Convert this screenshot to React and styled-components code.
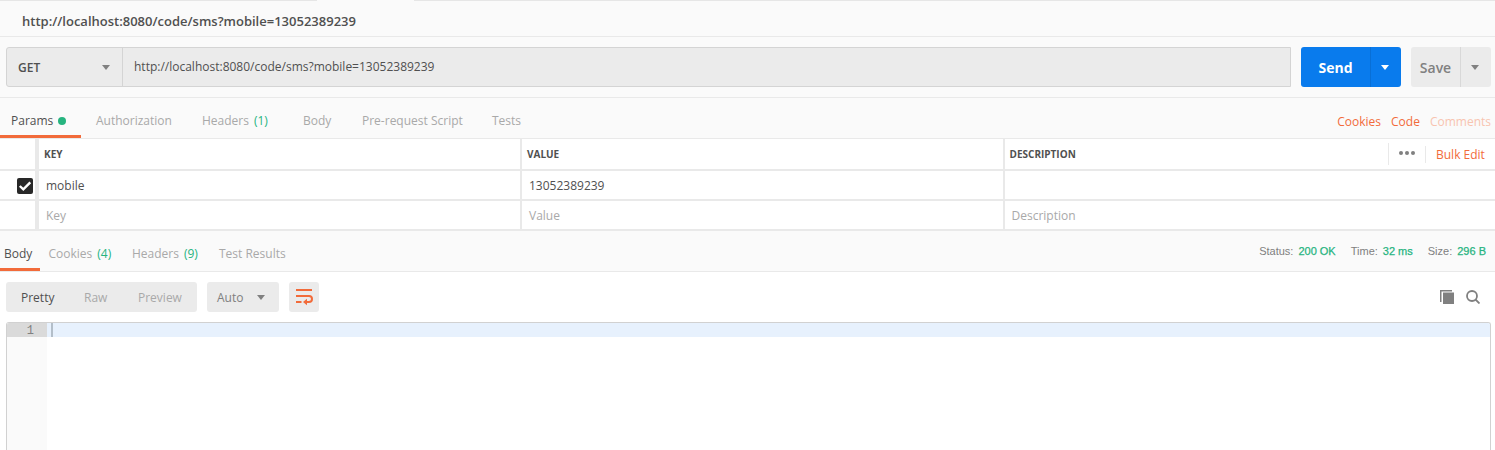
import React from "react";
import styled, { createGlobalStyle, css } from "styled-components";

const orange = "#f26b3a";
const green = "#26b47f";
const line = "#e9e9e9";

const GlobalStyle = createGlobalStyle`
  * { box-sizing: border-box; }
  body {
    margin: 0;
    background: #fff;
    font-family: "Open Sans", sans-serif;
    font-size: 12px;
    color: #505050;
    overflow: hidden;
  }
`;

const Page = styled.main`
  display: flex;
  flex-direction: column;
  width: 1495px;
  height: 450px;
  overflow: hidden;
  white-space: nowrap;
`;

const TabStrip = styled.div`
  display: flex;
  justify-content: space-between;
  height: 1px;
  flex: none;
  background: #fafafa;
`;

const StripEdge = styled.i`
  width: ${(p) => p.$w}px;
  background: #e6e6e6;
`;

const RequestTitle = styled.h1`
  flex: none;
  height: 36px;
  margin: 0;
  padding: 0 0 0 22px;
  line-height: 40px;
  background: #fafafa;
  border-bottom: 1px solid ${line};
  font-size: 13px;
  font-weight: 600;
`;

const RequestBar = styled.section`
  flex: none;
  display: flex;
  height: 61px;
  padding: 10px 4px 10px 6px;
  background: #fafafa;
  border-bottom: 1px solid ${line};
`;

const UrlField = styled.div`
  display: flex;
  width: 1285px;
  height: 40px;
  margin-right: 10px;
  background: #ebebeb;
  border: 1px solid #d4d4d4;
  border-radius: 3px 0 0 3px;
`;

const Method = styled.div`
  display: flex;
  align-items: center;
  justify-content: space-between;
  width: 116px;
  padding: 0 12px 0 11px;
  border-right: 1px solid #d4d4d4;
  font-weight: 600;
`;

const Url = styled.div`
  padding-left: 11px;
  line-height: 38px;
`;

const Caret = styled.i`
  width: 0;
  height: 0;
  border: 4px solid transparent;
  border-top: 5px solid ${(p) => p.$color || "#808080"};
  border-bottom: 0;
`;

const SplitButton = styled.div`
  display: flex;
  width: ${(p) => p.$w}px;
  height: 40px;
  margin-right: ${(p) => p.$gap || 0}px;
  border-radius: 3px;
  overflow: hidden;
  background: ${(p) => (p.$primary ? "#097bed" : "#ebebeb")};
  color: ${(p) => (p.$primary ? "#fff" : "#808080")};
  font-size: 14px;
  font-weight: ${(p) => (p.$primary ? 700 : 600)};
`;

const SplitLabel = styled.div`
  width: ${(p) => p.$w}px;
  line-height: 41px;
  text-align: center;
`;

const SplitArrow = styled.div`
  flex: 1;
  display: flex;
  align-items: center;
  justify-content: center;
  padding-right: 2px;
  border-left: 1px solid ${(p) => p.$line};
`;

const Tabs = styled.nav`
  flex: none;
  display: flex;
  height: ${(p) => p.$h}px;
  background: #fafafa;
  border-bottom: 1px solid ${line};
`;

const Tab = styled.div`
  display: flex;
  width: ${(p) => p.$w}px;
  padding-left: ${(p) => p.$pad || 0}px;
  line-height: ${(p) => p.$lh}px;
  color: #a9a9a9;
  ${(p) =>
    p.$active &&
    css`
      color: #505050;
      border-bottom: 3px solid ${orange};
    `}
`;

const Count = styled.span`
  margin-left: 5px;
  color: ${green};
`;

const Dot = styled.i`
  width: 8px;
  height: 8px;
  margin: 19px 0 0 5px;
  border-radius: 50%;
  background: ${green};
`;

const Links = styled.div`
  display: flex;
  gap: 10px;
  margin-left: auto;
  padding-right: 4px;
  line-height: 48px;
  color: ${orange};
`;

const Muted = styled.span`
  color: #f8c4b0;
`;

const Table = styled.section`
  flex: none;
  background: #fff;
`;

const Row = styled.div`
  display: flex;
  height: ${(p) => p.$h}px;
  border-bottom: 2px solid ${line};
`;

const CheckCell = styled.div`
  width: 39px;
  padding: 7px 0 0 17px;
  border-right: 4px solid ${line};
`;

const Checkbox = styled.div`
  width: 16px;
  height: 16px;
  border-radius: 2px;
  background: #282828;
  svg { display: block; }
`;

const Cell = styled.div`
  width: ${(p) => p.$w}px;
  padding-left: ${(p) => (p.$last ? 6.5 : 7)}px;
  line-height: 29px;
  color: ${(p) => (p.$placeholder ? "#a9a9a9" : "#505050")};
  border-right: ${(p) => (p.$last ? "0" : `2px solid ${line}`)};
`;

const HeadCell = styled(Cell)`
  display: flex;
  padding-left: ${(p) => (p.$last ? 4.5 : 5)}px;
  line-height: 31px;
  font-size: 10px;
  font-weight: 700;
`;

const HeadTools = styled.div`
  display: flex;
  align-items: center;
  margin-left: auto;
  font-size: 12px;
  font-weight: 400;
  color: ${orange};
`;

const MoreButton = styled.div`
  display: flex;
  align-items: center;
  gap: 2px;
  width: 37px;
  height: 22px;
  padding: 0 0 2px 10px;
  border-left: 1px solid ${line};
`;

const MoreDot = styled.i`
  width: 4px;
  height: 4px;
  border-radius: 50%;
  background: #808080;
`;

const BulkEdit = styled.div`
  width: 70px;
  height: 17px;
  padding-left: 10px;
  line-height: 17px;
  border-left: 1px solid ${line};
`;

const Stats = styled.div`
  display: flex;
  gap: 15px;
  margin-left: auto;
  padding-right: 9px;
  line-height: 40px;
  font-family: "Liberation Sans", sans-serif;
  font-size: 11px;
  color: #808080;
`;

const StatValue = styled.span`
  margin-left: 5px;
  color: ${green};
  -webkit-text-stroke: 0.25px ${green};
`;

const Toolbar = styled.section`
  flex: none;
  display: flex;
  height: 50px;
  padding: 10px 15px 10px 6px;
`;

const Group = styled.div`
  display: flex;
  align-items: center;
  width: ${(p) => p.$w}px;
  height: 30px;
  margin-right: 10px;
  padding-left: ${(p) => p.$pad}px;
  gap: ${(p) => p.$gap || 0}px;
  line-height: 32px;
  border-radius: 3px;
  background: #ebebeb;
  color: ${(p) => p.$color || "#a9a9a9"};
`;

const Mode = styled.span`
  width: ${(p) => p.$w}px;
  padding-top: 1px;
  color: ${(p) => (p.$active ? "#505050" : "#a9a9a9")};
`;

const GroupLabel = styled.span`
  padding-top: 1px;
`;

const ToolIcons = styled.div`
  display: flex;
  gap: 12px;
  margin: 8px 0 0 auto;
`;

const Editor = styled.section`
  flex: 1;
  display: flex;
  margin: 0 4px 0 6px;
  border: 1px solid #d1d1d1;
  border-bottom: 0;
  border-radius: 3px 3px 0 0;
  overflow: hidden;
`;

const Gutter = styled.div`
  width: 40px;
  background: #fafafa;
`;

const LineNumber = styled.div`
  height: 14px;
  padding-right: 13px;
  line-height: 17px;
  text-align: right;
  background: #dadada;
  color: #808080;
  font-family: "Liberation Mono", monospace;
  font-size: 12px;
`;

const ActiveLine = styled.div`
  flex: 1;
  height: 14px;
  padding-left: 4px;
  background: #e7f1fd;
`;

const Cursor = styled.i`
  display: block;
  width: 2px;
  height: 14px;
  background: #b3bec9;
`;

const requestTabs = [
  ["Authorization", 106],
  ["Headers", 101, "(1)"],
  ["Body", 59],
  ["Pre-request Script", 130],
  ["Tests", 60],
];

const responseTabs = [
  ["Cookies", 83.5, "(4)"],
  ["Headers", 87, "(9)"],
  ["Test Results", 90],
];

const stats = [
  ["Status:", "200 OK"],
  ["Time:", "32 ms"],
  ["Size:", "296 B"],
];

const address = "http://localhost:8080/code/sms?mobile=13052389239";

export default function App() {
  return (
    <Page>
      <GlobalStyle />
      <TabStrip>
        <StripEdge $w={317} />
        <StripEdge $w={1081} />
      </TabStrip>
      <RequestTitle>{address}</RequestTitle>
      <RequestBar>
        <UrlField>
          <Method>GET<Caret /></Method>
          <Url>{address}</Url>
        </UrlField>
        <SplitButton $primary $w={100} $gap={10}>
          <SplitLabel $w={69}>Send</SplitLabel>
          <SplitArrow $line="#086fd6"><Caret $color="#fff" /></SplitArrow>
        </SplitButton>
        <SplitButton $w={80}>
          <SplitLabel $w={49}>Save</SplitLabel>
          <SplitArrow $line="#d8d8d8"><Caret /></SplitArrow>
        </SplitButton>
      </RequestBar>
      <Tabs $h={41}>
        <Tab $active $w={81} $pad={11} $lh={46}>Params<Dot /></Tab>
        <Tab $w={15} />
        {requestTabs.map(([label, w, count]) => (
          <Tab key={label} $w={w} $lh={46}>
            {label}{count && <Count>{count}</Count>}
          </Tab>
        ))}
        <Links><span>Cookies</span><span>Code</span><Muted>Comments</Muted></Links>
      </Tabs>
      <Table>
        <Row $h={32}>
          <CheckCell />
          <HeadCell $w={483}>KEY</HeadCell>
          <HeadCell $w={483}>VALUE</HeadCell>
          <HeadCell $w={490} $last>
            DESCRIPTION
            <HeadTools>
              <MoreButton><MoreDot /><MoreDot /><MoreDot /></MoreButton>
              <BulkEdit>Bulk Edit</BulkEdit>
            </HeadTools>
          </HeadCell>
        </Row>
        <Row $h={30}>
          <CheckCell>
            <Checkbox>
              <svg width="16" height="16" viewBox="0 0 16 16">
                <path d="M2.8 8 6.3 11.3 13.3 4.3" fill="none" stroke="#fff" strokeWidth="2.4" />
              </svg>
            </Checkbox>
          </CheckCell>
          <Cell $w={483}>mobile</Cell>
          <Cell $w={483}>13052389239</Cell>
          <Cell $w={490} $last />
        </Row>
        <Row $h={30}>
          <CheckCell />
          <Cell $w={483} $placeholder>Key</Cell>
          <Cell $w={483} $placeholder>Value</Cell>
          <Cell $w={490} $last $placeholder>Description</Cell>
        </Row>
      </Table>
      <Tabs $h={41}>
        <Tab $active $w={40} $pad={4} $lh={45}>Body</Tab>
        <Tab $w={8.5} />
        {responseTabs.map(([label, w, count]) => (
          <Tab key={label} $w={w} $lh={45}>
            {label}{count && <Count>{count}</Count>}
          </Tab>
        ))}
        <Stats>
          {stats.map(([label, value]) => (
            <span key={label}>{label}<StatValue>{value}</StatValue></span>
          ))}
        </Stats>
      </Tabs>
      <Toolbar>
        <Group $w={191} $pad={15}>
          <Mode $active $w={63}>Pretty</Mode>
          <Mode $w={54}>Raw</Mode>
          <Mode>Preview</Mode>
        </Group>
        <Group $w={72} $pad={10} $gap={14} $color="#808080"><GroupLabel>Auto</GroupLabel><Caret /></Group>
        <Group $w={30} $pad={6}>
          <svg width="18" height="18" viewBox="0 0 18 18" fill="none" stroke={orange} strokeWidth="2">
            <path d="M1 2H17M1 8H14a3 3 0 0 1 0 6H11M1 14H6.5" />
            <path d="M12 10.8 8 14l4 3.2z" fill={orange} stroke="none" />
          </svg>
        </Group>
        <ToolIcons>
          <svg width="14" height="14" viewBox="0 0 14 14" fill="#808080">
            <path d="M0 0H12V1.5H1.5V12H0zM3 2.5H14V14H3z" />
          </svg>
          <svg width="14" height="14" viewBox="0 0 14 14" fill="none" stroke="#808080" strokeWidth="1.8">
            <circle cx="6" cy="6" r="5" />
            <path d="m9.5 9.5 4 4" />
          </svg>
        </ToolIcons>
      </Toolbar>
      <Editor>
        <Gutter><LineNumber>1</LineNumber></Gutter>
        <ActiveLine><Cursor /></ActiveLine>
      </Editor>
    </Page>
  );
}
